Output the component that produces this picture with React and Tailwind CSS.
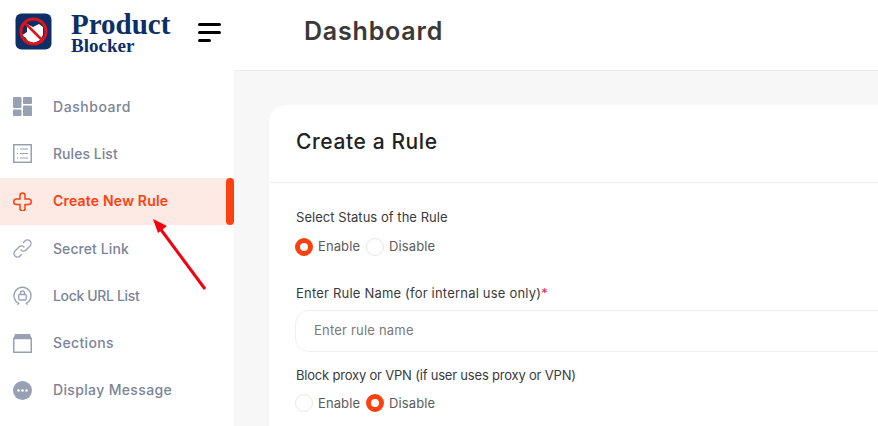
import React from "react";

const Logo = () => (
  <svg width="38" height="38" viewBox="0 0 38 38" className="shrink-0">
    <rect x="0.5" y="0.5" width="36" height="36" rx="6" fill="#0b2f66" />
    <path d="M12 11l6 3 6-3 4 3 0 8-3 5-6 3-6-2-3-4-4-1 6-4z" fill="#fff" />
    <circle cx="18.5" cy="18.5" r="12.5" fill="none" stroke="#e0121a" strokeWidth="3" />
    <path d="M10 10l17 17" stroke="#e0121a" strokeWidth="2.500" />
  </svg>
);

const DashIcon = () => (
  <svg width="19" height="19" viewBox="0 0 19 19" fill="#98a1b3">
    <rect x="0" y="0" width="8.5" height="11" rx="1" />
    <rect x="10" y="0" width="9" height="7" rx="1" />
    <rect x="0" y="12.5" width="8.5" height="6.5" rx="1" />
    <rect x="10" y="8.5" width="9" height="10.5" rx="1" />
  </svg>
);

const ListIcon = () => (
  <svg width="19" height="19" viewBox="0 0 19 19" fill="none" stroke="#98a1b3">
    <rect x="0.75" y="0.75" width="17.5" height="17.5" strokeWidth="1.5" />
    <path d="M4 5h1M7 5h8M4 9.500h1M7 9.500h8M4 14h1M7 14h8" strokeWidth="1" />
  </svg>
);

const PlusIcon = () => (
  <svg width="19" height="19" viewBox="0 0 19 19" fill="none" stroke="#fd4010" strokeWidth="1.5">
    <path d="M7 6.500V3a2.500 2.500 0 0 1 5 0v3.500h3.500a2.500 2.500 0 0 1 0 5.500H12v4a2.500 2.500 0 0 1-5 0v-4H3.500a2.500 2.500 0 0 1 0-5.500z" transform="translate(0 0.500)" />
  </svg>
);

const LinkIcon = () => (
  <svg width="19" height="19" viewBox="0 0 19 19" fill="none" stroke="#98a1b3" strokeWidth="1.300" strokeLinecap="round">
    <path d="M8 11a3.500 3.500 0 0 0 5 0l4-4a3.500 3.500 0 0 0-5-5l-1.500 1.500" />
    <path d="M11 8a3.500 3.500 0 0 0-5 0l-4 4a3.500 3.500 0 0 0 5 5l1.500-1.500" />
  </svg>
);

const LockIcon = () => (
  <svg width="19" height="19" viewBox="0 0 19 19" fill="none" stroke="#98a1b3" strokeWidth="1.300">
    <path d="M6 17.500A8.500 8.500 0 1 1 13 17.500" />
    <path d="M13.500 16.500l-0.500 1.500 1.800 0.300M5.500 16.500l0.500 1.500-1.800 0.300" strokeWidth="1" />
    <rect x="5.800" y="8.500" width="7.400" height="5.500" rx="1" />
    <path d="M7.500 8.500V7a2 2 0 0 1 4 0v1.500" />
  </svg>
);

const SectionIcon = () => (
  <svg width="19" height="19" viewBox="0 0 19 19">
    <path d="M2 0h15l1.500 4.500H0.500z" fill="#98a1b3" />
    <rect x="0.750" y="4.500" width="17.500" height="13.750" fill="none" stroke="#98a1b3" strokeWidth="1.500" />
  </svg>
);

const MessageIcon = () => (
  <svg width="19" height="19" viewBox="0 0 19 19">
    <circle cx="9.500" cy="9.500" r="9.500" fill="#98a1b3" />
    <circle cx="5.500" cy="9.500" r="1.300" fill="#fff" />
    <circle cx="9.500" cy="9.500" r="1.300" fill="#fff" />
    <circle cx="13.500" cy="9.500" r="1.300" fill="#fff" />
  </svg>
);

const navItems = [
  { label: "Dashboard", icon: <DashIcon />, track: "tracking-[0.55px]" },
  { label: "Rules List", icon: <ListIcon />, track: "tracking-[0.05px]" },
  { label: "Create New Rule", icon: <PlusIcon />, track: "tracking-[0.2px]", active: true },
  { label: "Secret Link", icon: <LinkIcon />, track: "tracking-[0.08px]" },
  { label: "Lock URL List", icon: <LockIcon />, track: "tracking-[-0.35px]" },
  { label: "Sections", icon: <SectionIcon />, track: "tracking-[0.35px]" },
  { label: "Display Message", icon: <MessageIcon />, track: "tracking-[0.35px]" },
];

const Radio = ({ label, checked }) => (
  <label className="flex items-center gap-[5px]">
    {checked ? (
      <span className="w-[18px] h-[18px] rounded-full border-[5px] border-[#fd4010] bg-white" />
    ) : (
      <span className="w-[18px] h-[18px] rounded-full border border-[#e6e6e6] bg-white" />
    )}
    <span className="text-[13px] text-[#5b5b5b] tracking-[0.1px]">{label}</span>
  </label>
);

export default function App() {
  return (
    <div className="relative w-[878px] h-[426px] overflow-hidden bg-white font-['Inter',sans-serif]">
      <header className="h-[70px] flex items-center bg-white pb-[6px]">
        <div className="w-[304px] flex items-center pl-[15px]">
          <Logo />
          <div className="ml-[18px] flex flex-col font-['Liberation_Serif',serif] font-bold text-[#0b2f66] w-[110px]">
            <span className="text-[29px] leading-[26px]">Product</span>
            <span className="text-[19px] leading-[17px]">Blocker</span>
          </div>
          <div className="ml-[17px] flex flex-col gap-[5px]">
            <span className="block w-[23px] h-[3px] rounded-full bg-black" />
            <span className="block w-[23px] h-[3px] rounded-full bg-black" />
            <span className="block w-[13px] h-[3px] rounded-full bg-black" />
          </div>
        </div>
        <h1 className="text-[25px] font-semibold text-[#3b3838] tracking-[0.8px]">Dashboard</h1>
      </header>

      <div className="flex h-[356px]">
        <aside className="w-[234px] shrink-0 bg-white pt-[13px]">
          {navItems.map((item) => (
            <div
              key={item.label}
              className={`relative h-[47.300px] flex items-center pl-[13px] gap-[21px] ${item.active ? "bg-[#feeae4]" : ""}`}
            >
              {item.icon}
              <span
                className={`text-[14px] pb-[1px] ${item.track} ${item.active ? "font-semibold text-[#fd4010]" : "font-medium text-[#7c8497]"}`}
              >
                {item.label}
              </span>
              {item.active && (
                <span className="absolute right-0 top-0 w-[8px] h-full rounded-[4px] bg-[#fd4010]" />
              )}
            </div>
          ))}
        </aside>

        <main className="flex-1 bg-[#f7f7f7] border-t border-[#ececec] pl-[35px] pt-[34px] overflow-hidden">
          <div className="bg-white rounded-tl-[18px] w-[640px] h-[400px]">
            <div className="h-[78px] flex items-center pl-[27px] pb-[3px] border-b border-[#f0f0f0]">
              <h2 className="text-[21px] font-medium text-[#222] tracking-[0.6px]">Create a Rule</h2>
            </div>
            <div className="pl-[26px] pt-[25px]">
              <p className="ml-[1px] text-[13px] text-[#3a3a3a] leading-[18px] tracking-[0.04px]">Select Status of the Rule</p>
              <div className="flex gap-[6px] mt-[11px]">
                <Radio label="Enable" checked />
                <Radio label="Disable" />
              </div>
              <p className="ml-[1px] text-[13px] text-[#3a3a3a] leading-[18px] tracking-[0.2px] mt-[27px]">
                Enter Rule Name (for internal use only)<span className="text-[#e8244a]">*</span>
              </p>
              <input
                placeholder="Enter rule name"
                className="block mt-[8px] w-[620px] h-[42px] pb-[2px] rounded-[14px] border border-[#f0f0f0] pl-[18px] text-[13px] tracking-[0.2px] placeholder:text-[#7a7a7a] outline-none"
              />
              <p className="ml-[1px] text-[13px] text-[#3a3a3a] leading-[18px] tracking-[-0.2px] mt-[14px]">
                Block proxy or VPN (if user uses proxy or VPN)
              </p>
              <div className="flex gap-[6px] mt-[10px]">
                <Radio label="Enable" />
                <Radio label="Disable" checked />
              </div>
            </div>
          </div>
        </main>
      </div>

      {/* annotation arrow */}
      <svg className="absolute left-0 top-0 pointer-events-none" width="878" height="426">
        <path d="M205 289L159 227" stroke="#f5000f" strokeWidth="3" />
        <path d="M153 219l14 7-9 7z" fill="#f5000f" />
      </svg>
    </div>
  );
}
